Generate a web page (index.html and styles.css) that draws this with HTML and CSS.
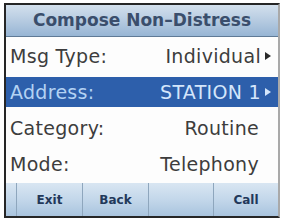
FILE: index.html
```html
<!DOCTYPE html>
<html lang="en">
<head>
    <meta charset="UTF-8">
    <title>Compose Non-Distress</title>
    <link rel="stylesheet" href="styles.css">
</head>
<body>
    <div class="screen">
        <div class="title">Compose Non&ndash;Distress</div>

        <div class="menu">
            <div class="row">
                <span class="label">Msg Type:</span>
                <span class="value">Individual<span class="arrow"></span></span>
            </div>
            <div class="row sel">
                <span class="label">Address:</span>
                <span class="value">STATION 1<span class="arrow"></span></span>
            </div>
            <div class="row">
                <span class="label">Category:</span>
                <span class="value plain">Routine</span>
            </div>
            <div class="row">
                <span class="label">Mode:</span>
                <span class="value plain">Telephony</span>
            </div>
        </div>

        <div class="softkeys">
            <div class="key edge"></div>
            <div class="key">Exit</div>
            <div class="key">Back</div>
            <div class="key"></div>
            <div class="key">Call</div>
        </div>
    </div>
</body>
</html>
```

FILE: styles.css
```css
* {
    margin: 0;
    padding: 0;
    box-sizing: border-box;
}

body {
    background: #ffffff;
    font-family: 'DejaVu Sans', Verdana, sans-serif;
}

.screen {
    margin: 3px 0 0 4px;
    width: 276px;
    height: 215px;
    border: 2px solid #262626;
    border-right: 2px solid #a9a9a9;
    background: #fdfdfd;
    display: flex;
    flex-direction: column;
}

.title {
    height: 32px;
    line-height: 30px;
    text-align: center;
    font-size: 17px;
    font-weight: bold;
    color: #3a4e6c;
    background: linear-gradient(#d3e0ed 0%, #b9cde2 45%, #97b5d4 100%);
    border-bottom: 1px solid #5f7a96;
}

.menu {
    height: 146px;
    display: flex;
    flex-direction: column;
    padding-top: 1px;
}

.row {
    height: 36px;
    display: flex;
    justify-content: space-between;
    align-items: center;
    padding: 0 7px 0 4px;
    font-size: 19px;
    letter-spacing: 0.3px;
    color: #3d3d3d;
}

.row.sel {
    height: 30px;
    margin: 3px 0;
    background: #2d5fab;
    color: #d4e6fb;
}

.row.sel .label {
    color: #b3d2f3;
}

.value {
    display: flex;
    align-items: center;
}

.value.plain {
    margin-right: 12px;
}

.arrow {
    width: 0;
    height: 0;
    margin-left: 4px;
    border-top: 4px solid transparent;
    border-bottom: 4px solid transparent;
    border-left: 6px solid #2a2a2a;
}

.row.sel .arrow {
    border-left-color: #d4e6fb;
}

.softkeys {
    height: 33px;
    display: grid;
    grid-template-columns: 10px 66px 66px 65px 65px;
    background: linear-gradient(#d9e6f2 0%, #c3d7ea 50%, #a9c4de 100%);
}

.key {
    border-left: 1px solid #8ea6bd;
    display: flex;
    align-items: center;
    justify-content: center;
    font-size: 12px;
    font-weight: bold;
    color: #22385a;
}

.key.edge {
    border-left: none;
}
```
